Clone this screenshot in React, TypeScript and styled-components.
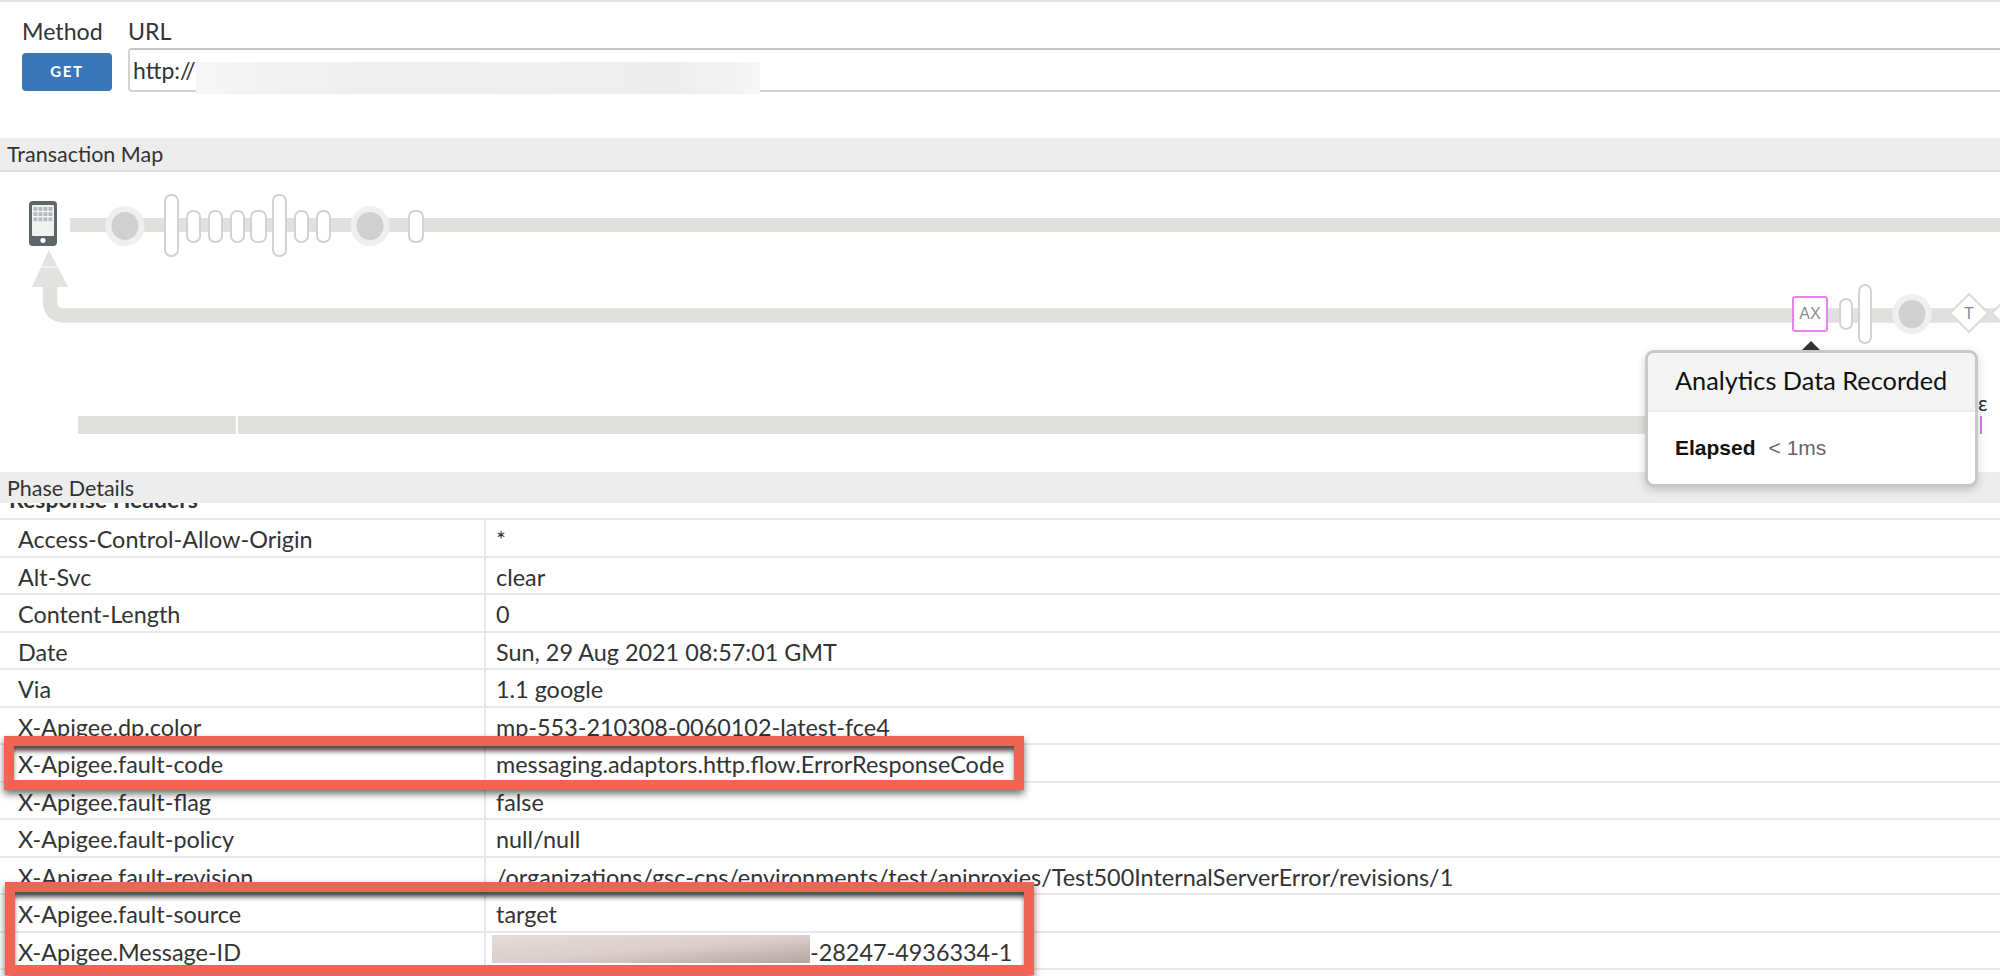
import styled, { createGlobalStyle } from "styled-components";

const GlobalStyle = createGlobalStyle`
  html, body {
    margin: 0;
    padding: 0;
    background: #fff;
    overflow: hidden;
  }
  * {
    box-sizing: border-box;
  }
`;

const Page = styled.div`
  position: relative;
  width: 2000px;
  height: 976px;
  overflow: hidden;
  border-top: 2px solid #e2e2e2;
  font-family: "Lato", "Open Sans", sans-serif;
  color: #333;
`;

const RequestForm = styled.div`
  display: grid;
  grid-template-columns: 106px 1fr;
  height: 136px;
  padding: 14px 0 0 22px;
`;

const FieldLabel = styled.div`
  font-size: 23.2px;
  line-height: 30px;
  height: 32px;
`;

const MethodButton = styled.div`
  display: flex;
  align-items: center;
  justify-content: center;
  width: 90px;
  height: 38px;
  margin-top: 5px;
  padding-bottom: 3px;
  background: #3b77b8;
  border-radius: 4px;
  color: #fff;
  font-size: 15px;
  font-weight: 700;
  letter-spacing: 1.6px;
`;

const UrlInput = styled.div`
  position: relative;
  display: flex;
  align-items: center;
  height: 44px;
  padding-left: 3px;
  border: 2px solid #d2d2d2;
  border-top-color: #c4c4c4;
  border-right: 0;
  border-radius: 4px 0 0 4px;
  font-size: 23px;
`;

const UrlMask = styled.div`
  position: absolute;
  left: 66px;
  top: 12px;
  width: 564px;
  height: 32px;
  background: linear-gradient(90deg, #f6f6f6, #eeeeee 30%, #efefef 60%, #ededed 85%, #f6f6f6);
`;

const SectionBar = styled.div`
  display: flex;
  align-items: center;
  height: 34px;
  padding-left: 7px;
  background: #ededed;
  border-bottom: 2px solid #dedede;
  font-size: 21.5px;
`;

const PhaseBar = styled(SectionBar)`
  position: relative;
  z-index: 1;
  height: 31px;
  border-bottom: 0;
`;

const MapCanvas = styled.div`
  height: 300px;
`;

const MapDrawing = styled.svg`
  display: block;
  width: 2000px;
  height: 300px;
`;

const NodeLabel = styled.text`
  font-family: "Liberation Sans", Arial, sans-serif;
  font-size: 16px;
  fill: #8c8c8c;
  text-anchor: middle;
`;

const Popover = styled.div`
  position: absolute;
  left: 1645px;
  top: 348px;
  width: 333px;
  height: 137px;
  background: #fff;
  border: 3px solid #c8c8c8;
  border-radius: 9px;
  box-shadow: 0 3px 10px rgba(0, 0, 0, 0.18);
  z-index: 3;

  &::before {
    content: "";
    position: absolute;
    left: 154px;
    top: -12px;
    border-left: 9px solid transparent;
    border-right: 9px solid transparent;
    border-bottom: 9px solid #333;
  }
`;

const PopoverTitle = styled.div`
  height: 59px;
  padding: 11px 0 0 27px;
  background: #f4f4f4;
  border-bottom: 2px solid #ececec;
  border-radius: 6px 6px 0 0;
  color: #111;
  font-size: 25.3px;
  line-height: 32px;
`;

const PopoverBody = styled.div`
  display: flex;
  align-items: baseline;
  gap: 13px;
  padding: 24px 0 0 27px;
  font-family: "Liberation Sans", Arial, sans-serif;
  font-size: 21px;
`;

const ElapsedLabel = styled.span`
  color: #111;
  font-weight: 700;
`;

const ElapsedValue = styled.span`
  color: #666;
`;

const DetailsScroller = styled.div`
  height: 473px;
  overflow: hidden;
`;

const DetailsHeading = styled.div`
  margin-top: -18px;
  height: 33px;
  padding-left: 9px;
  font-size: 23px;
  font-weight: 700;
  line-height: 28px;
  white-space: nowrap;
`;

const HeaderRow = styled.div`
  display: grid;
  grid-template-columns: 484px 1fr;
  height: 37.5px;
  border-top: 2px solid #e8e8e8;
  font-size: 23.4px;
  line-height: 38px;
`;

const HeaderName = styled.div`
  padding-left: 18px;
  white-space: nowrap;
`;

const HeaderValue = styled.div`
  display: flex;
  padding-left: 10px;
  border-left: 2px solid #e8e8e8;
  white-space: nowrap;
`;

const ValueMask = styled.span`
  width: 318px;
  height: 28px;
  margin: 2px 0 0 -4px;
  background: linear-gradient(175deg, #e6dbd9 0%, #dccfcd 50%, #b5a4a2 100%);
`;

const Callout = styled.div<{ $left: number; $top: number; $width: number; $height: number }>`
  position: absolute;
  left: ${(p) => p.$left}px;
  top: ${(p) => p.$top}px;
  width: ${(p) => p.$width}px;
  height: ${(p) => p.$height}px;
  border: 10px solid #ee6555;
  box-shadow: 0 4px 7px rgba(0, 0, 0, 0.55), inset 0 6px 5px -1px rgba(0, 0, 0, 0.7);
  z-index: 2;
`;

const headers: [string, string][] = [
  ["Access-Control-Allow-Origin", "*"],
  ["Alt-Svc", "clear"],
  ["Content-Length", "0"],
  ["Date", "Sun, 29 Aug 2021 08:57:01 GMT"],
  ["Via", "1.1 google"],
  ["X-Apigee.dp.color", "mp-553-210308-0060102-latest-fce4"],
  ["X-Apigee.fault-code", "messaging.adaptors.http.flow.ErrorResponseCode"],
  ["X-Apigee.fault-flag", "false"],
  ["X-Apigee.fault-policy", "null/null"],
  ["X-Apigee.fault-revision", "/organizations/gsc-cps/environments/test/apiproxies/Test500InternalServerError/revisions/1"],
  ["X-Apigee.fault-source", "target"],
];

// x, width of the request flow capsules, tall ones cross the track further
const requestCapsules = [
  { x: 165, w: 13, tall: true },
  { x: 187, w: 13, tall: false },
  { x: 209, w: 13, tall: false },
  { x: 231, w: 13, tall: false },
  { x: 251, w: 15, tall: false },
  { x: 273, w: 13, tall: true },
  { x: 295, w: 13, tall: false },
  { x: 317, w: 13, tall: false },
  { x: 409, w: 14, tall: false },
];

const Capsule = ({ x, y, w, h }: { x: number; y: number; w: number; h: number }) => (
  <rect x={x} y={y} width={w} height={h} rx={6} fill="#fff" stroke="#d2d2d2" strokeWidth={2} />
);

const Endpoint = ({ cx, cy }: { cx: number; cy: number }) => (
  <g>
    <ellipse cx={cx} cy={cy} rx={19.5} ry={20} fill="#efefef" />
    <ellipse cx={cx} cy={cy} rx={13.5} ry={14} fill="#d0d0d0" />
  </g>
);

const Phone = () => (
  <g>
    <rect x={29} y={201} width={28} height={45} rx={4} fill="#5d666b" />
    <rect x={32} y={205} width={22} height={31} rx={1} fill="#f0f1f1" />
    {[0, 1, 2].map((row) =>
      [0, 1, 2, 3].map((col) => (
        <rect key={`${row}-${col}`} x={33.5 + col * 5} y={207 + row * 5.2} width={3.8} height={3.8} fill="#b4b9bb" />
      ))
    )}
    <ellipse cx={43} cy={240.5} rx={2.6} ry={2.4} fill="#fff" />
  </g>
);

const TransactionMap = () => (
  <MapDrawing viewBox="0 172 2000 300">
    <rect x={70} y={218} width={1930} height={14} fill="#e0e0de" />
    <path d="M50 287 V301 Q50 315.5 65 315.5 H2000" fill="none" stroke="#e0e0de" strokeWidth={14.5} />
    <polygon points="49,250 32,287 68,287" fill="#e2e2e0" />
    <line x1={40} y1={267} x2={59} y2={267} stroke="#fff" strokeWidth={1} />
    <Phone />
    <Endpoint cx={125} cy={226} />
    <Endpoint cx={370} cy={226} />
    {requestCapsules.map((c) => (
      <Capsule key={c.x} x={c.x} y={c.tall ? 195 : 211} w={c.w} h={c.tall ? 61 : 31} />
    ))}
    <rect x={1793} y={297} width={34} height={34} rx={2} fill="#fff" stroke="#ea82ee" strokeWidth={2} />
    <NodeLabel x={1810} y={319}>AX</NodeLabel>
    <Capsule x={1840} y={299} w={12} h={30} />
    <Capsule x={1859} y={285} w={12} h={58} />
    <Endpoint cx={1912} cy={314} />
    <polygon points="1969,294 1988,313 1969,332 1950,313" fill="#fff" stroke="#dcdcdc" strokeWidth={2} strokeLinejoin="round" />
    <NodeLabel x={1969} y={319}>T</NodeLabel>
    <polygon points="2011,294 2030,313 2011,332 1992,313" fill="#fff" stroke="#dcdcdc" strokeWidth={2} strokeLinejoin="round" />
    <rect x={78} y={416} width={158} height={18} fill="#e0e0de" />
    <rect x={238} y={416} width={1500} height={18} fill="#e0e0de" />
    <text x={1978} y={411} fontFamily="Lato, sans-serif" fontSize={21} fill="#333">ε</text>
    <rect x={1980} y={416} width={2} height={18} fill="#d67be6" />
  </MapDrawing>
);

const App = () => (
  <Page>
    <GlobalStyle />
    <RequestForm>
      <div>
        <FieldLabel>Method</FieldLabel>
        <MethodButton>GET</MethodButton>
      </div>
      <div>
        <FieldLabel>URL</FieldLabel>
        <UrlInput>
          http://
          <UrlMask />
        </UrlInput>
      </div>
    </RequestForm>
    <SectionBar>Transaction Map</SectionBar>
    <MapCanvas>
      <TransactionMap />
    </MapCanvas>
    <PhaseBar>Phase Details</PhaseBar>
    <DetailsScroller>
      <DetailsHeading>Response Headers</DetailsHeading>
      {headers.map(([name, value]) => (
        <HeaderRow key={name}>
          <HeaderName>{name}</HeaderName>
          <HeaderValue>{value}</HeaderValue>
        </HeaderRow>
      ))}
      <HeaderRow>
        <HeaderName>X-Apigee.Message-ID</HeaderName>
        <HeaderValue>
          <ValueMask />
          -28247-4936334-1
        </HeaderValue>
      </HeaderRow>
      <HeaderRow />
    </DetailsScroller>
    <Popover>
      <PopoverTitle>Analytics Data Recorded</PopoverTitle>
      <PopoverBody>
        <ElapsedLabel>Elapsed</ElapsedLabel>
        <ElapsedValue>&lt; 1ms</ElapsedValue>
      </PopoverBody>
    </Popover>
    <Callout $left={4} $top={734} $width={1020} $height={54} />
    <Callout $left={5} $top={880} $width={1029} $height={93} />
  </Page>
);

export default App;
